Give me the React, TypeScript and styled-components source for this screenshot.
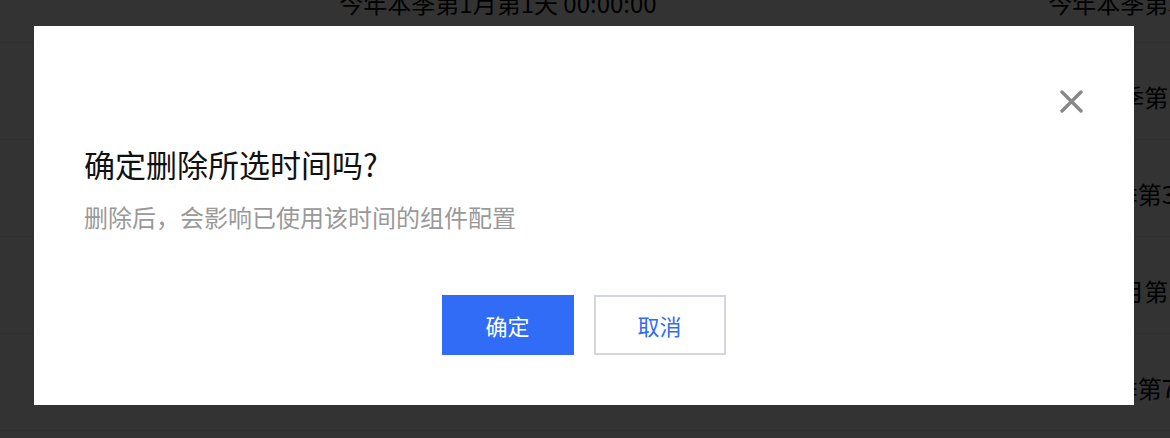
import React from 'react';
import styled, { createGlobalStyle } from 'styled-components';

const GlobalStyle = createGlobalStyle`
  html, body {
    margin: 0;
    padding: 0;
    width: 100%;
    height: 100%;
    overflow: hidden;
    background: #ffffff;
  }
  body {
    font-family: "Noto Sans CJK SC", "Noto Sans", sans-serif;
  }
`;

interface RowData {
  start: string;
  end: string;
}

const rows: RowData[] = [
  { start: '今年本季第1月第1天 00:00:00', end: '今年本季第3月第1天 00:00:00' },
  { start: '今年本季第1月第1天 00:00:00', end: '今年本季第1月第1天 00:00:00' },
  { start: '今年本季第2月第1天 00:00:00', end: '今年本季第3月第10天 00:00:00' },
  { start: '今年本月第1天 00:00:00', end: '今年本月第1周第1天 00:00:00' },
  { start: '今年本季第1月第1天 00:00:00', end: '今年本季第7月第10天 00:00:00' },
  { start: '今年本季第1月第1天 00:00:00', end: '今年本季第1月第1天 00:00:00' },
];

const Page = styled.div`
  width: 1170px;
  height: 438px;
  overflow: hidden;
`;

const Table = styled.div`
  display: flex;
  flex-direction: column;
  margin-top: -54px;
`;

const Row = styled.div<{ $first?: boolean }>`
  display: grid;
  grid-template-columns: 996px 422px;
  height: 97px;
  border-bottom: 1px solid #e8e8e8;
  align-items: center;
  padding-top: ${(p) => (p.$first ? '16px' : '10px')};
  box-sizing: border-box;
  font-size: 24px;
  color: #000;
`;

const Cell = styled.div`
  text-align: center;
  white-space: nowrap;
`;

const Overlay = styled.div`
  position: fixed;
  inset: 0;
  background: rgba(0, 0, 0, 0.8);
  display: flex;
  align-items: flex-start;
  padding: 26px 0 0 34px;
`;

const Dialog = styled.div`
  width: 1100px;
  height: 379px;
  box-sizing: border-box;
  background: #ffffff;
  padding: 64px 51px 50px 50px;
  display: flex;
  flex-direction: column;
`;

const CloseRow = styled.div`
  display: flex;
  justify-content: flex-end;
  height: 23px;
`;

const CloseButton = styled.button`
  width: 23px;
  height: 23px;
  padding: 0;
  border: none;
  background: transparent;
  cursor: pointer;
  display: flex;
`;

const Title = styled.h2`
  margin: 31px 0 0;
  font-size: 31px;
  line-height: 40px;
  font-weight: 400;
  color: #111;
`;

const Description = styled.p`
  margin: 17px 0 0;
  font-size: 24px;
  line-height: 32px;
  color: #999;
`;

const Actions = styled.div`
  display: flex;
  justify-content: center;
  gap: 20px;
  margin-top: auto;
`;

const ActionButton = styled.button<{ $primary?: boolean }>`
  width: 132px;
  height: 60px;
  box-sizing: border-box;
  font-family: inherit;
  font-size: 22px;
  cursor: pointer;
  background: ${(p) => (p.$primary ? '#306cf6' : '#ffffff')};
  color: ${(p) => (p.$primary ? '#ffffff' : '#306cf6')};
  border: ${(p) => (p.$primary ? 'none' : '2px solid #d3d6de')};
`;

const CloseIcon = () => (
  <svg width="23" height="23" viewBox="0 0 23 23">
    <path d="M2 2 L21 21 M21 2 L2 21" stroke="#888" strokeWidth="3.4" strokeLinecap="round" />
  </svg>
);

const App: React.FC = () => {
  return (
    <>
      <GlobalStyle />
      <Page>
        <Table>
          {rows.map((row, i) => (
            <Row key={i} $first={i === 0}>
              <Cell>{row.start}</Cell>
              <Cell>{row.end}</Cell>
            </Row>
          ))}
        </Table>
      </Page>
      <Overlay>
        <Dialog>
          <CloseRow>
            <CloseButton aria-label="关闭">
              <CloseIcon />
            </CloseButton>
          </CloseRow>
          <Title>确定删除所选时间吗?</Title>
          <Description>删除后，会影响已使用该时间的组件配置</Description>
          <Actions>
            <ActionButton $primary>确定</ActionButton>
            <ActionButton>取消</ActionButton>
          </Actions>
        </Dialog>
      </Overlay>
    </>
  );
};

export default App;
